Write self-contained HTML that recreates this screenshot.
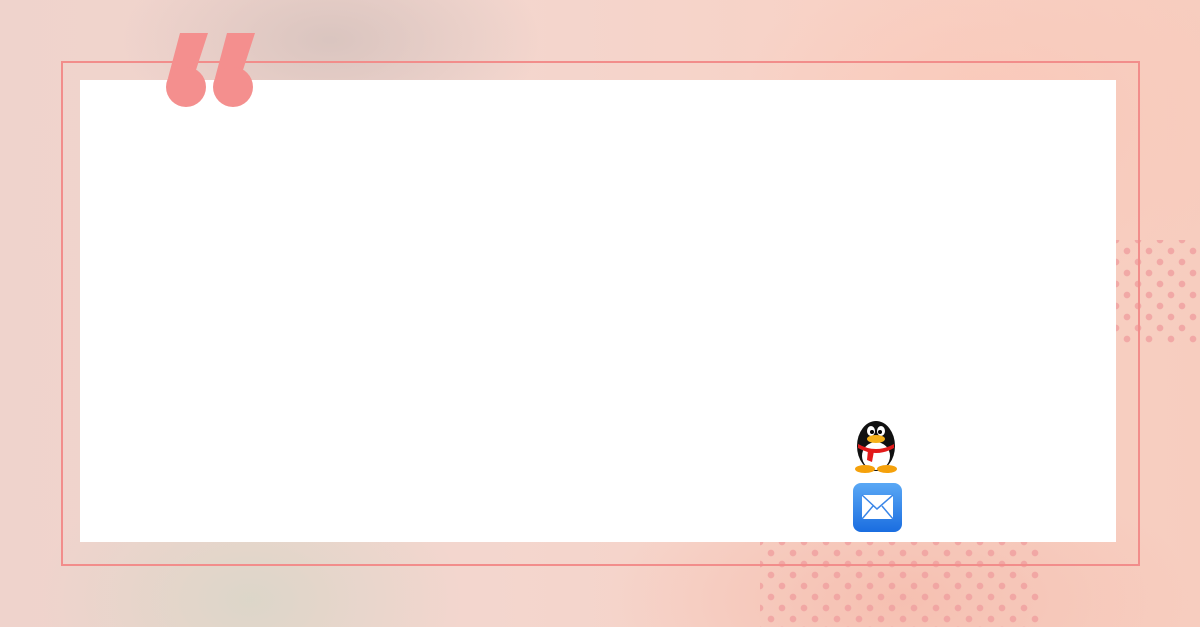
<!DOCTYPE html>
<html><head><meta charset="utf-8"><style>
html,body{margin:0;padding:0}
body{width:1200px;height:627px;position:relative;overflow:hidden;
background:
radial-gradient(ellipse 380px 260px at 1000px 120px, rgba(250,200,185,0.9), rgba(250,200,185,0) 70%),
radial-gradient(ellipse 420px 200px at 900px 600px, rgba(245,190,175,0.9), rgba(245,190,175,0) 70%),
radial-gradient(ellipse 300px 200px at 250px 600px, rgba(215,215,200,0.8), rgba(215,215,200,0) 70%),
radial-gradient(ellipse 300px 150px at 330px 40px, rgba(215,195,190,0.9), rgba(215,195,190,0) 70%),
linear-gradient(90deg,#efd3cc 0%,#f3d6ce 40%,#f8d2c6 70%,#f7cdbf 100%);}
.frame{position:absolute;left:61px;top:61px;width:1075px;height:501px;border:2px solid #f28d8b}
.box{position:absolute;left:80px;top:80px;width:1036px;height:462px;background:#fff}
.dots{position:absolute;background-image:radial-gradient(circle,#f0a0a0 3px,transparent 3.6px),radial-gradient(circle,#f0a0a0 3px,transparent 3.6px);background-size:22px 22px;background-position:0 0,11px 11px;opacity:.8}
</style></head><body>
<div class="dots" style="left:1116px;top:240px;width:84px;height:105px"></div>
<div class="dots" style="left:760px;top:542px;width:280px;height:85px"></div>
<div class="frame"></div>
<div class="box"></div>
<svg style="position:absolute;left:0;top:0" width="1200" height="627">
<g fill="#f48f8e">
<path d="M180 33 L208 33 L196 70 L168 78 Z"/><circle cx="186" cy="87" r="20"/>
<path d="M227 33 L255 33 L243 70 L215 78 Z"/><circle cx="233" cy="87" r="20"/>
</g>
<g transform="translate(850,416)">
<ellipse cx="26" cy="30" rx="19" ry="25" fill="#111"/>
<ellipse cx="26" cy="40" rx="14" ry="14" fill="#fff"/>
<ellipse cx="21" cy="15" rx="4" ry="5" fill="#fff"/><ellipse cx="31" cy="15" rx="4" ry="5" fill="#fff"/>
<circle cx="22" cy="16" r="2" fill="#000"/><circle cx="30" cy="16" r="2" fill="#000"/>
<ellipse cx="26" cy="23" rx="9" ry="4" fill="#f5b11b"/>
<path d="M8 28 Q26 38 44 28 L44 32 Q26 42 8 32 Z" fill="#e21a1a"/>
<path d="M18 34 L24 35 L22 46 L17 44 Z" fill="#e21a1a"/>
<ellipse cx="15" cy="53" rx="10" ry="4" fill="#f5a10b"/><ellipse cx="37" cy="53" rx="10" ry="4" fill="#f5a10b"/>
</g>
<defs><linearGradient id="m" x1="0" y1="0" x2="0" y2="1"><stop offset="0" stop-color="#5aa8f5"/><stop offset="1" stop-color="#1a6de0"/></linearGradient></defs>
<rect x="853" y="483" width="49" height="49" rx="8" fill="url(#m)"/>
<rect x="862" y="495" width="31" height="24" fill="#fff"/>
<path d="M862 495 L877 509 L893 495 M862 519 L873 506 M893 519 L882 506" stroke="#3a86e8" stroke-width="1.5" fill="none"/>
</svg>
</body></html>
